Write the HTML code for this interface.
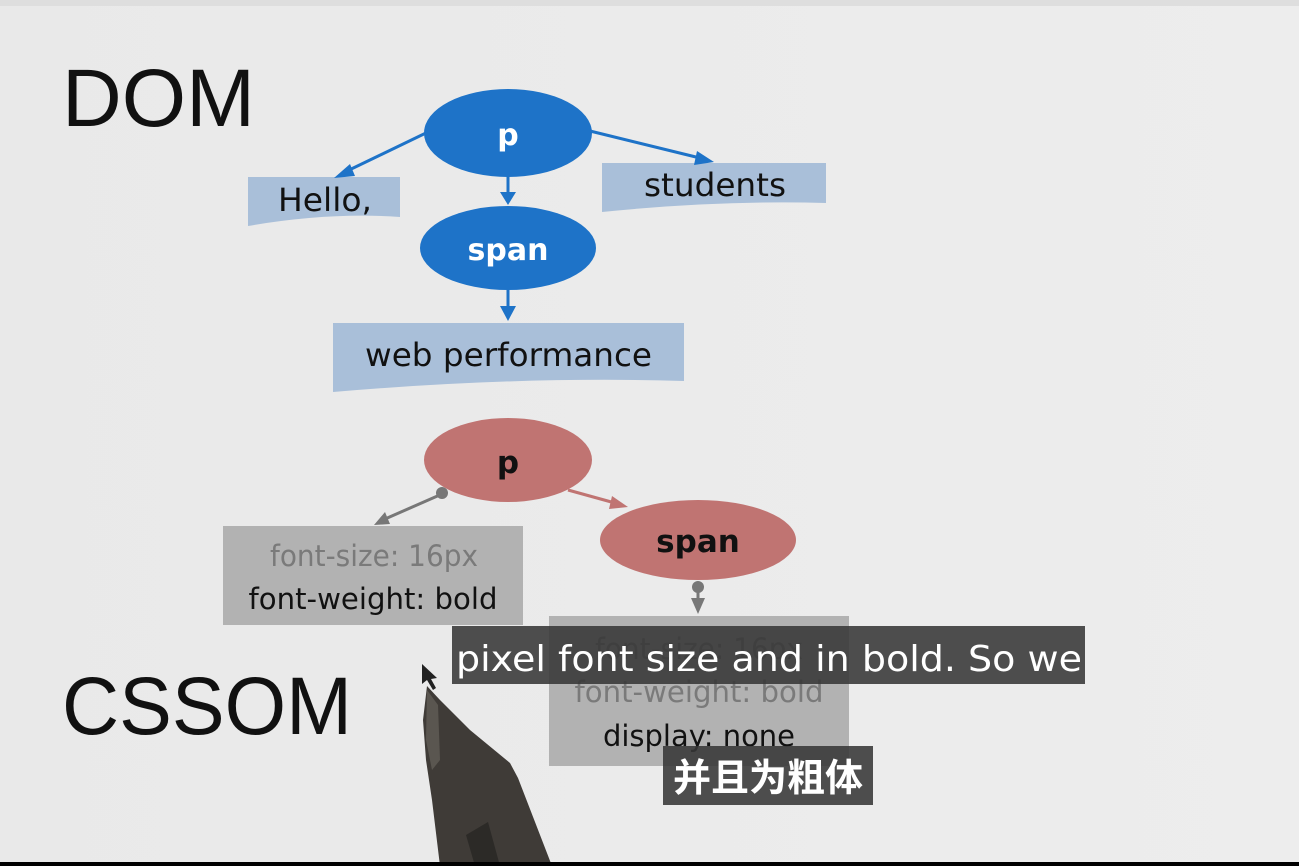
<!DOCTYPE html>
<html><head><meta charset="utf-8"><style>
html,body{margin:0;padding:0;}
body{width:1299px;height:866px;overflow:hidden;background:#ebebeb;}
svg{display:block}
</style></head><body>
<svg width="1299" height="866" viewBox="0 0 1299 866" xmlns="http://www.w3.org/2000/svg">
<defs>
<linearGradient id="bg" x1="0" y1="0" x2="1" y2="0"><stop offset="0" stop-color="#e9e9e9"/><stop offset="1" stop-color="#ededed"/></linearGradient>
</defs>
<rect width="1299" height="866" fill="url(#bg)"/>
<rect x="0" y="0" width="1299" height="6" fill="#dedede"/>
<text x="62" y="126" font-family="Liberation Sans, sans-serif" font-size="82" fill="#111" textLength="193" lengthAdjust="spacingAndGlyphs">DOM</text>
<text x="62" y="734" font-family="Liberation Sans, sans-serif" font-size="82" fill="#111" textLength="290" lengthAdjust="spacingAndGlyphs">CSSOM</text>

<path d="M248,177 L400,177 L400,217 Q330,212 248,226 Z" fill="#a9bfd9"/>
<path d="M602,163 L826,163 L826,203 Q720,200 602,212 Z" fill="#a9bfd9"/>
<path d="M333,323 L684,323 L684,381 Q520,376 333,392 Z" fill="#a9bfd9"/>
<g font-family="DejaVu Sans, sans-serif" fill="#111" font-size="32">
<text x="278" y="211" textLength="94" lengthAdjust="spacingAndGlyphs">Hello,</text>
<text x="644" y="196" textLength="142" lengthAdjust="spacingAndGlyphs">students</text>
<text x="365" y="366" textLength="287" lengthAdjust="spacingAndGlyphs">web performance</text>
</g>
<g stroke="#1e73c8" stroke-width="3" fill="#1e73c8">
<line x1="428" y1="132" x2="345" y2="172"/>
<polygon points="334,178 350,164 355,176" stroke="none"/>
<line x1="590" y1="131" x2="700" y2="158"/>
<polygon points="714,162 697,151 694,165" stroke="none"/>
<line x1="508" y1="176" x2="508" y2="194"/>
<polygon points="500,192 516,192 508,205" stroke="none"/>
<line x1="508" y1="290" x2="508" y2="308"/>
<polygon points="500,306 516,306 508,321" stroke="none"/>
</g>
<ellipse cx="508" cy="133" rx="84" ry="44" fill="#1e73c8"/>
<ellipse cx="508" cy="248" rx="88" ry="42" fill="#1e73c8"/>
<g font-family="DejaVu Sans, sans-serif" font-weight="bold" fill="#fff" font-size="30" text-anchor="middle">
<text x="508" y="145">p</text>
<text x="508" y="260">span</text>
</g>

<g stroke="#777" stroke-width="3" fill="#777">
<line x1="442" y1="494" x2="385" y2="519"/>
<polygon points="374,525 385,512 390,524" stroke="none"/>
<circle cx="442" cy="493" r="6" stroke="none"/>
<line x1="698" y1="588" x2="698" y2="602"/>
<polygon points="691,598 705,598 698,614" stroke="none"/>
<circle cx="698" cy="587" r="6" stroke="none"/>
</g>
<g stroke="#c07472" stroke-width="3" fill="#c07472">
<line x1="568" y1="490" x2="615" y2="503"/>
<polygon points="628,507 612,496 609,509" stroke="none"/>
</g>
<ellipse cx="508" cy="460" rx="84" ry="42" fill="#c07472"/>
<ellipse cx="698" cy="540" rx="98" ry="40" fill="#c07472"/>
<g font-family="DejaVu Sans, sans-serif" font-weight="bold" fill="#111" font-size="31" text-anchor="middle">
<text x="508" y="473">p</text>
<text x="698" y="552">span</text>
</g>
<rect x="223" y="526" width="300" height="99" fill="#b2b2b2"/>
<rect x="549" y="616" width="300" height="150" fill="#b2b2b2"/>
<g font-family="DejaVu Sans, sans-serif" font-size="29" text-anchor="middle">
<text x="374" y="566" fill="#7a7a7a" textLength="208" lengthAdjust="spacingAndGlyphs">font-size: 16px</text>
<text x="373" y="609" fill="#111" textLength="249" lengthAdjust="spacingAndGlyphs">font-weight: bold</text>
<text x="699" y="659" fill="#7a7a7a" textLength="208" lengthAdjust="spacingAndGlyphs">font-size: 16px</text>
<text x="699" y="702" fill="#7a7a7a" textLength="249" lengthAdjust="spacingAndGlyphs">font-weight: bold</text>
<text x="699" y="746" fill="#111" textLength="192" lengthAdjust="spacingAndGlyphs">display: none</text>
</g>

<polygon points="427,686 440,700 470,730 510,763 518,778 552,866 440,866 432,800 426,760 423,720" fill="#3f3b37"/>
<polygon points="427,690 438,705 440,760 432,770 426,740" fill="#5a5650"/>
<polygon points="466,835 488,822 500,866 475,866" fill="#2c2a27"/>
<polygon points="422,664 422,684 427,680 433,690 436,688 431,679 437,678" fill="#222"/>

<rect x="452" y="626" width="633" height="58" fill="rgba(55,55,55,0.88)"/>
<text x="456" y="671" font-family="DejaVu Sans, sans-serif" font-size="36" fill="#fff" textLength="626" lengthAdjust="spacingAndGlyphs">pixel font size and in bold. So we</text>
<rect x="663" y="746" width="210" height="59" fill="rgba(55,55,55,0.88)"/>
<text x="768" y="791" font-family="Liberation Sans, 'Noto Sans CJK SC', sans-serif" font-weight="bold" font-size="38" fill="#fff" text-anchor="middle">并且为粗体</text>

<rect x="0" y="862" width="1299" height="4" fill="#000"/>
</svg>
</body></html>
